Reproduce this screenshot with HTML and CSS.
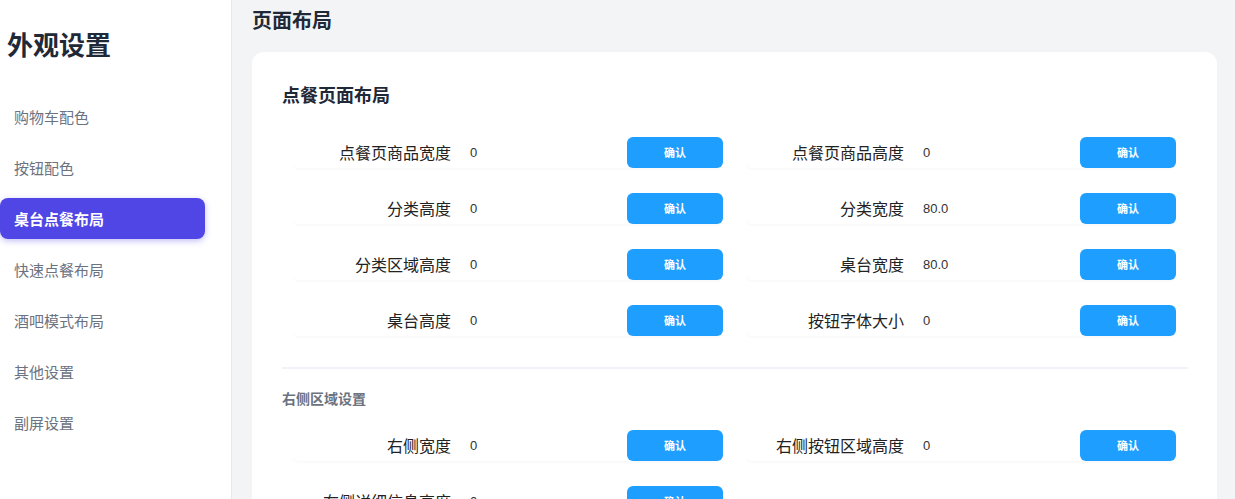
FILE: index.html
```html
<!DOCTYPE html>
<html>
<head>
  <meta charset="UTF-8">
  <title>外观设置</title>
  <link rel="stylesheet" href="styles.css">
</head>
<body>
<div class="layout">
  <aside class="sidebar">
    <h1 class="side-title">外观设置</h1>
    <nav class="side-nav">
      <div class="nav-item">购物车配色</div>
      <div class="nav-item">按钮配色</div>
      <div class="nav-item active">桌台点餐布局</div>
      <div class="nav-item">快速点餐布局</div>
      <div class="nav-item">酒吧模式布局</div>
      <div class="nav-item">其他设置</div>
      <div class="nav-item">副屏设置</div>
    </nav>
  </aside>

  <main class="main">
    <h2 class="page-title">页面布局</h2>
    <div class="card">
      <h3 class="card-title">点餐页面布局</h3>
      <div class="form-grid">
        <div class="row"><span class="label">点餐页商品宽度</span><span class="value">0</span><button class="btn">确认</button></div>
        <div class="row"><span class="label">点餐页商品高度</span><span class="value">0</span><button class="btn">确认</button></div>
        <div class="row"><span class="label">分类高度</span><span class="value">0</span><button class="btn">确认</button></div>
        <div class="row"><span class="label">分类宽度</span><span class="value">80.0</span><button class="btn">确认</button></div>
        <div class="row"><span class="label">分类区域高度</span><span class="value">0</span><button class="btn">确认</button></div>
        <div class="row"><span class="label">桌台宽度</span><span class="value">80.0</span><button class="btn">确认</button></div>
        <div class="row"><span class="label">桌台高度</span><span class="value">0</span><button class="btn">确认</button></div>
        <div class="row"><span class="label">按钮字体大小</span><span class="value">0</span><button class="btn">确认</button></div>
      </div>

      <div class="divider"></div>

      <div class="section-label">右侧区域设置</div>
      <div class="form-grid">
        <div class="row"><span class="label">右侧宽度</span><span class="value">0</span><button class="btn">确认</button></div>
        <div class="row"><span class="label">右侧按钮区域高度</span><span class="value">0</span><button class="btn">确认</button></div>
        <div class="row"><span class="label">右侧详细信息高度</span><span class="value">0</span><button class="btn">确认</button></div>
      </div>
    </div>
  </main>
</div>
</body>
</html>
```

FILE: styles.css
```css
* {
  box-sizing: border-box;
}

body {
  margin: 0;
  height: 100vh;
  overflow: hidden;
  background-color: #f3f4f6;
  color: #1f2937;
  font-family: "Noto Sans CJK SC", "Noto Sans", sans-serif;
}

.layout {
  display: flex;
  height: 100vh;
}

.sidebar {
  width: 232px;
  flex-shrink: 0;
  background-color: #fff;
  border-right: 1px solid #e7e8ec;
  padding-top: 26px;
}

.side-title {
  margin: 0 0 34px 7px;
  font-size: 26px;
  line-height: 36px;
  font-weight: 700;
  color: #1f2937;
}

.side-nav {
  display: flex;
  flex-direction: column;
  gap: 10px;
  width: 205px;
}

.nav-item {
  height: 41px;
  line-height: 41px;
  padding-left: 14px;
  font-size: 15px;
  color: #6b7280;
  border-radius: 8px;
}

.nav-item.active {
  background-color: #4f46e5;
  color: #fff;
  font-weight: 700;
  box-shadow: 0 2px 6px rgba(79, 70, 229, 0.35);
}

.main {
  flex: 1;
  padding: 7px 18px 0 20px;
}

.page-title {
  margin: 0 0 20px;
  font-size: 20px;
  line-height: 25px;
  font-weight: 700;
  color: #1f2937;
}

.card {
  background-color: #fff;
  border-radius: 12px;
  padding: 30px 29px 30px 30px;
}

.card-title {
  margin: 0 0 30px;
  font-size: 18px;
  line-height: 24px;
  font-weight: 700;
  color: #1f2937;
}

.form-grid {
  display: grid;
  grid-template-columns: 430px 430px;
  column-gap: 23px;
  row-gap: 24px;
  padding-left: 11px;
}

.row {
  display: flex;
  align-items: center;
  height: 32px;
  border-radius: 6px;
  box-shadow: 0 2px 2px rgba(0, 0, 0, 0.025);
}

.label {
  width: 158px;
  text-align: right;
  font-size: 16px;
  color: #222;
}

.value {
  flex: 1;
  margin-left: 19px;
  font-size: 13px;
  color: #333;
  font-family: "Liberation Sans", "Noto Sans CJK SC", sans-serif;
}

.btn {
  width: 96px;
  height: 31px;
  border: none;
  border-radius: 6px;
  background-color: #1e9fff;
  color: #fff;
  font-size: 11px;
  font-weight: 700;
  font-family: "Noto Sans CJK SC", sans-serif;
  cursor: pointer;
}

.divider {
  height: 2px;
  background-color: #f1f2f8;
  margin: 31px 0 20px;
}

.section-label {
  font-size: 14px;
  line-height: 18px;
  font-weight: 700;
  color: #6b7280;
  margin-bottom: 22px;
}
```
